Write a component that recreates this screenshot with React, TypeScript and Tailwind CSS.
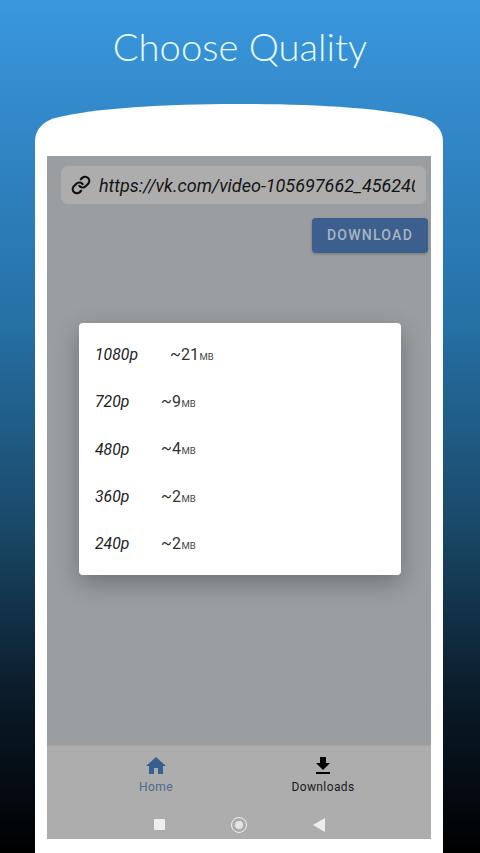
import { MdHome, MdFileDownload } from "react-icons/md";
import { Link } from "lucide-react";

const rows = [
  { q: "1080p", s: "~21", w: "w-[75px]" },
  { q: "720p", s: "~9", w: "w-[66px]" },
  { q: "480p", s: "~4", w: "w-[66px]" },
  { q: "360p", s: "~2", w: "w-[66px]" },
  { q: "240p", s: "~2", w: "w-[66px]" },
];

export default function App() {
  return (
    <div className="h-[853px] w-[480px] overflow-hidden flex flex-col items-center bg-[linear-gradient(180deg,#3a97de_0%,#2570a5_38%,#1a4a6a_61%,#0a1a28_82%,#000000_100%)] font-['Roboto',sans-serif]">
      <h1 className="mt-[23px] h-[46px] leading-[46px] text-[38.2px] font-light text-[#e6fbfb] font-['Lato','Noto_Sans',sans-serif]">
        Choose Quality
      </h1>
      <div className="mt-[35px] w-[408px] ml-[-2px] h-[749px] shrink-0 flex flex-col">
        <svg width="408" height="52" viewBox="0 0 408 52" className="block shrink-0">
          <path d="M0 52V38C0 24 10 17 20 14C60 4 130 0 204 0C278 0 348 4 388 14C398 17 408 24 408 38V52Z" fill="#ffffff" />
        </svg>
        <div className="flex-1 bg-white px-[12px]">
          <div className="h-[683px] w-[384px] flex flex-col bg-[#9a9ea1]">
            <div className="flex-1 flex flex-col pt-[10px] pl-[14px] pr-[3px]">
              <div className="h-[38px] w-[365px] rounded-[7px] bg-[#adadad] flex items-center pl-[10px] pr-[11px]">
                <Link className="w-[20px] h-[20px] text-[#111111] shrink-0" strokeWidth={2.6} />
                <span className="ml-[8px] overflow-hidden whitespace-nowrap italic text-[18px] text-[#141414]">
                  https://vk.com/video-105697662_456240000
                </span>
              </div>
              <div className="mt-[14px] flex justify-end">
                <div className="h-[35px] w-[116px] rounded-[4px] bg-[#3c5f8e] flex items-center justify-center text-[14px] font-medium tracking-[1.25px] text-[#a9b4c2] shadow-[0_1px_3px_rgba(0,0,0,0.25)]">
                  DOWNLOAD
                </div>
              </div>
              <div className="mt-[70px] ml-[18px] h-[252px] w-[322px] rounded-[4px] bg-white pt-[8px] px-[16px] shadow-[0_8px_24px_rgba(0,0,0,0.28)] flex flex-col">
                {rows.map((r) => (
                  <div key={r.q} className="h-[47.4px] shrink-0 flex items-center text-[#222222]">
                    <span className={`${r.w} italic text-[15.8px]`}>{r.q}</span>
                    <span className="text-[16px] text-[#333333]">{r.s}</span>
                    <span className="ml-[0.5px] text-[9.5px] text-[#444444] mt-[4px]">MB</span>
                  </div>
                ))}
              </div>
            </div>
            <div className="h-[65px] bg-[#adadad] flex justify-center border-t border-[#a3a6a8]">
              <div className="w-[168px] flex flex-col items-center pt-[8px] pl-[2px] text-[#4d6a90]">
                <MdHome className="w-[24px] h-[24px] text-[#37608f]" />
                <span className="mt-[1px] text-[12px] tracking-[0.4px] leading-[16px]">Home</span>
              </div>
              <div className="w-[168px] flex flex-col items-center pt-[8px] text-[#1a1a1a]">
                <MdFileDownload className="w-[24px] h-[24px] text-[#000000]" />
                <span className="mt-[1px] text-[12px] tracking-[0.4px] leading-[16px]">Downloads</span>
              </div>
            </div>
            <div className="h-[29px] bg-[#adadad] flex items-center justify-center gap-[66px] pl-[1px]">
              <div className="w-[11px] h-[11px] bg-[#eeeeee] rounded-[1px]" />
              <div className="w-[16px] h-[16px] rounded-full border-[1.5px] border-[#eeeeee] flex items-center justify-center">
                <div className="w-[8px] h-[8px] rounded-full bg-[#e4e4e4]" />
              </div>
              <svg width="12" height="14" viewBox="0 0 12 14" className="shrink-0">
                <path d="M12 0V14L0 7Z" fill="#eeeeee" />
              </svg>
            </div>
          </div>
        </div>
      </div>
    </div>
  );
}
